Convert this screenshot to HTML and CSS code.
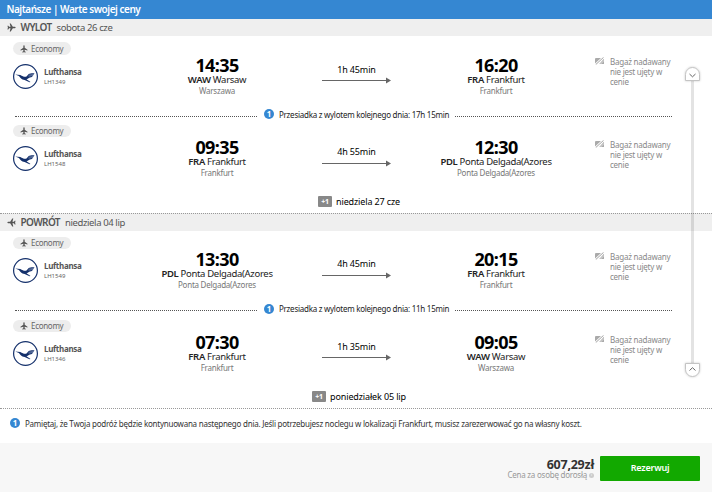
FILE: index.html
```html
<!DOCTYPE html>
<html lang="pl">
<head>
    <meta charset="UTF-8">
    <meta name="viewport" content="width=device-width, initial-scale=1.0">
    <title>Najtańsze | Warte swojej ceny</title>
    <link rel="stylesheet" href="styles.css">
</head>
<body>
    <svg width="0" height="0" class="defs">
        <symbol id="plane" viewBox="0 0 24 24">
            <path d="M23 12c0-1.200-1-2-2.200-2h-5.300L10 1.500H7.200L9.500 10H5.500L3.500 7H1.200L2.500 12l-1.300 5h2.300l2-3h4l-2.300 8.500H10l5.500-8.500h5.300c1.200 0 2.200-.8 2.200-2z"/>
        </symbol>
        <symbol id="crane" viewBox="0 0 25 25">
            <circle cx="12.500" cy="12.500" r="11.900" fill="#fff" stroke="#14306b" stroke-width="1.200"/>
            <path d="M2.300 10.600l5 .3c2.500 1.500 4.300 2.300 6.200 1.600l2.200-2.400c1-.7 3-.9 5.800-.8l-.8 1.300-.8 1.200-1 1.100-2.700.8c-1 .9-1.900 1.300-2.700 1.600l4 2.700-.9.200-5-2.200c-3.200-.3-4.300-2.400-5.700-3.900z" fill="#14306b"/>
            <path d="M15.500 11.200l5.500-.9M15.500 12.300l4.500-.9" stroke="#9dabc9" stroke-width=".5"/>
        </symbol>
        <symbol id="arrow" viewBox="0 0 69 7">
            <path d="M0 3.500h65" stroke="#666" stroke-width="1"/>
            <path d="M64 .5l5 3-5 3z" fill="#666"/>
        </symbol>
        <symbol id="nobag" viewBox="0 0 10 8">
            <path d="M0 1.500L1 1h5L0 6.500zM9 1.800V7H4.200z" fill="#aaa"/>
            <path d="M.8 7.500L8.500.4" stroke="#999" stroke-width=".9"/>
            <path d="M5 7.500L9.500 3" stroke="#fff" stroke-width=".6"/>
        </symbol>
    </svg>

    <div class="offer">
        <div class="title">Najtańsze | Warte swojej ceny</div>

        <div class="direction">
            <svg class="direction-icon"><use href="#plane"/></svg>
            <b>WYLOT</b><span>sobota 26 cze</span>
        </div>
        <div class="leg first">
            <div class="airline">
                <div class="cabin"><svg><use href="#plane"/></svg>Economy</div>
                <div class="carrier">
                    <svg><use href="#crane"/></svg>
                    <div><div class="name">Lufthansa</div><div class="number">LH1349</div></div>
                </div>
            </div>
            <div class="stop">
                <div class="time">14:35</div>
                <div class="city"><b>WAW</b> Warsaw</div>
                <div class="airport">Warszawa</div>
            </div>
            <div class="duration">1h 45min<svg><use href="#arrow"/></svg></div>
            <div class="stop">
                <div class="time">16:20</div>
                <div class="city"><b>FRA</b> Frankfurt</div>
                <div class="airport">Frankfurt</div>
            </div>
            <div class="baggage"><svg><use href="#nobag"/></svg><p>Bagaż nadawany<br>nie jest ujęty w<br>cenie</p></div>
        </div>
        <div class="layover"><i></i><em class="info">1</em><span>Przesiadka z wylotem kolejnego dnia: 17h 15min</span><i></i></div>
        <div class="leg">
            <div class="airline">
                <div class="cabin"><svg><use href="#plane"/></svg>Economy</div>
                <div class="carrier">
                    <svg><use href="#crane"/></svg>
                    <div><div class="name">Lufthansa</div><div class="number">LH1548</div></div>
                </div>
            </div>
            <div class="stop">
                <div class="time">09:35</div>
                <div class="city"><b>FRA</b> Frankfurt</div>
                <div class="airport">Frankfurt</div>
            </div>
            <div class="duration low">4h 55min<svg><use href="#arrow"/></svg></div>
            <div class="stop">
                <div class="time">12:30</div>
                <div class="city"><b>PDL</b> Ponta Delgada(Azores</div>
                <div class="airport">Ponta Delgada(Azores</div>
            </div>
            <div class="baggage"><svg><use href="#nobag"/></svg><p>Bagaż nadawany<br>nie jest ujęty w<br>cenie</p></div>
        </div>
        <div class="next-day"><b>+1</b><span>niedziela 27 cze</span></div>

        <div class="direction return">
            <svg class="direction-icon"><use href="#plane"/></svg>
            <b>POWRÓT</b><span>niedziela 04 lip</span>
        </div>
        <div class="leg">
            <div class="airline">
                <div class="cabin"><svg><use href="#plane"/></svg>Economy</div>
                <div class="carrier">
                    <svg><use href="#crane"/></svg>
                    <div><div class="name">Lufthansa</div><div class="number">LH1549</div></div>
                </div>
            </div>
            <div class="stop">
                <div class="time">13:30</div>
                <div class="city"><b>PDL</b> Ponta Delgada(Azores</div>
                <div class="airport">Ponta Delgada(Azores</div>
            </div>
            <div class="duration low">4h 45min<svg><use href="#arrow"/></svg></div>
            <div class="stop">
                <div class="time">20:15</div>
                <div class="city"><b>FRA</b> Frankfurt</div>
                <div class="airport">Frankfurt</div>
            </div>
            <div class="baggage"><svg><use href="#nobag"/></svg><p>Bagaż nadawany<br>nie jest ujęty w<br>cenie</p></div>
        </div>
        <div class="layover tall"><i></i><em class="info">1</em><span>Przesiadka z wylotem kolejnego dnia: 11h 15min</span><i></i></div>
        <div class="leg">
            <div class="airline">
                <div class="cabin"><svg><use href="#plane"/></svg>Economy</div>
                <div class="carrier">
                    <svg><use href="#crane"/></svg>
                    <div><div class="name">Lufthansa</div><div class="number">LH1346</div></div>
                </div>
            </div>
            <div class="stop">
                <div class="time">07:30</div>
                <div class="city"><b>FRA</b> Frankfurt</div>
                <div class="airport">Frankfurt</div>
            </div>
            <div class="duration">1h 35min<svg><use href="#arrow"/></svg></div>
            <div class="stop">
                <div class="time">09:05</div>
                <div class="city"><b>WAW</b> Warsaw</div>
                <div class="airport">Warszawa</div>
            </div>
            <div class="baggage"><svg><use href="#nobag"/></svg><p>Bagaż nadawany<br>nie jest ujęty w<br>cenie</p></div>
        </div>
        <div class="next-day"><b>+1</b><span>poniedziałek 05 lip</span></div>

        <div class="note"><em class="info">1</em><span>Pamiętaj, że Twoja podróż będzie kontynuowana następnego dnia. Jeśli potrzebujesz noclegu w lokalizacji Frankfurt, musisz zarezerwować go na własny koszt.</span></div>

        <div class="footer">
            <div class="price">
                <div class="amount">607,29zł</div>
                <div class="per-person"><span>Cena za osobę dorosłą</span><em>i</em></div>
            </div>
            <button class="book-btn">Rezerwuj</button>
        </div>

        <div class="rail">
            <svg class="handle" viewBox="0 0 15 14"><path d="M.5 13.500V7.500a7 7 0 0 1 14 0v6z"/><path d="M4.500 7l3 2.800 3-2.800"/></svg>
            <div class="bar"></div>
            <svg class="handle" viewBox="0 0 15 14"><path d="M.5.5v6a7 7 0 0 0 14 0v-6z"/><path d="M4.500 7.500l3-2.800 3 2.800"/></svg>
        </div>
    </div>
</body>
</html>
```

FILE: styles.css
```css
* {
    box-sizing: border-box;
}
body {
    margin: 0;
    font-family: "Noto Sans", sans-serif;
    background: #fff;
    color: #333;
}
.defs {
    position: absolute;
}
.offer {
    position: relative;
    width: 712px;
    height: 492px;
    overflow: hidden;
}
.title {
    height: 19px;
    padding-left: 6.5px;
    font-size: 10px;
    line-height: 19px;
    font-weight: 600;
    letter-spacing: -0.47px;
    color: #fff;
    background: #3587d2;
}
.direction {
    display: flex;
    align-items: center;
    height: 17px;
    padding-left: 7px;
    font-size: 9.5px;
    line-height: 17px;
    letter-spacing: -0.38px;
    color: #555;
    background: #efefef;
}
.direction b {
    margin: 0 5px 0 4.5px;
    font-size: 10px;
    font-weight: 600;
    letter-spacing: -0.62px;
}
.direction-icon {
    width: 9px;
    height: 9px;
    fill: #555;
}
.direction.return {
    height: 18px;
    border-top: 1px dotted #999;
}
.return .direction-icon {
    transform: scaleX(-1);
}
.leg {
    display: grid;
    grid-template-columns: 147px 140px 139px 140px 146px;
    height: 64px;
}
.leg.first {
    margin-top: 5px;
}
.direction.return + .leg {
    margin-top: 4px;
}
.airline {
    padding: 2px 0 0 13px;
}
.first .airline {
    padding-top: 1px;
}
.cabin {
    display: flex;
    align-items: center;
    width: 58px;
    height: 12px;
    padding-left: 7px;
    font-size: 8px;
    line-height: 12px;
    letter-spacing: -0.3px;
    color: #666;
    background: #ededed;
    border-radius: 7px;
}
.first .cabin {
    height: 13px;
}
.cabin svg {
    width: 8px;
    height: 8px;
    margin-right: 3px;
    fill: #555;
    transform: rotate(-90deg);
}
.carrier {
    display: flex;
    margin-top: 9px;
}
.carrier svg {
    width: 25px;
    height: 25px;
    margin-right: 6px;
}
.name {
    margin-top: 2px;
    font-size: 8px;
    line-height: 12px;
    font-weight: 700;
    letter-spacing: -0.3px;
    color: #555;
}
.number {
    font-size: 6px;
    line-height: 8px;
    color: #666;
}
.stop {
    text-align: center;
}
.time {
    margin-top: 14px;
    font-size: 18px;
    line-height: 20px;
    font-weight: 700;
    letter-spacing: -0.6px;
    color: #000;
}
.city {
    margin-top: -1px;
    font-size: 9.5px;
    line-height: 11px;
    letter-spacing: -0.32px;
    color: #222;
}
.city b {
    font-weight: 600;
}
.airport {
    font-size: 8px;
    line-height: 11px;
    letter-spacing: -0.25px;
    color: #777;
}
.duration {
    padding-top: 22px;
    text-align: center;
    font-size: 9px;
    line-height: 13px;
    letter-spacing: -0.15px;
    color: #000;
}
.duration svg {
    display: block;
    width: 69px;
    height: 7px;
    margin: 1px auto 0;
}
.duration.low svg {
    margin-top: 2px;
}
.baggage {
    display: flex;
    padding: 16px 0 0 29px;
    font-size: 8px;
    line-height: 10px;
    letter-spacing: -0.24px;
    color: #888;
}
.leg:not(.first) .baggage {
    padding-top: 17px;
}
.baggage svg {
    width: 10px;
    height: 8px;
    margin: 0 5px 0 0;
}
.baggage p {
    margin: 0;
}
.layover {
    display: flex;
    align-items: center;
    height: 18px;
    padding: 0 40px 0 15px;
    font-size: 8px;
    letter-spacing: -0.26px;
    color: #222;
}
.layover.tall {
    height: 19px;
}
.layover i {
    width: 242px;
    margin-top: 4px;
    border-top: 1px dotted #555;
}
.layover span + i {
    flex: 1;
}
.layover span {
    margin: 0 6px 0 5px;
    white-space: nowrap;
}
.info {
    width: 10px;
    height: 10px;
    border-radius: 50%;
    font-size: 8px;
    line-height: 10px;
    font-style: normal;
    font-weight: 700;
    text-align: center;
    color: #fff;
    background: #3587d2;
}
.layover .info {
    margin-left: 7px;
}
.next-day {
    display: flex;
    align-items: center;
    justify-content: center;
    height: 26px;
    padding: 3px 0 0 6px;
    font-size: 9px;
    letter-spacing: -0.14px;
    color: #000;
}
.next-day b {
    width: 14px;
    height: 11px;
    margin-right: 4px;
    font-size: 7px;
    line-height: 11px;
    text-align: center;
    color: #fff;
    background: #888;
    border-radius: 1px;
}
.note {
    display: flex;
    align-items: center;
    height: 35px;
    padding: 0 0 6px 10px;
    border-top: 1px dotted #999;
    font-size: 8px;
    letter-spacing: -0.235px;
}
.note span {
    margin-left: 5px;
    white-space: nowrap;
}
.footer {
    display: flex;
    justify-content: flex-end;
    height: 49px;
    padding: 13px 12px 0 0;
    background: #f7f7f7;
}
.price {
    margin-right: 6px;
    text-align: right;
}
.amount {
    font-size: 12.5px;
    line-height: 17px;
    font-weight: 700;
    letter-spacing: -0.25px;
}
.per-person {
    display: flex;
    justify-content: flex-end;
    font-size: 8px;
    line-height: 4px;
    letter-spacing: -0.24px;
    color: #999;
}
.per-person em {
    width: 5px;
    height: 5px;
    margin-left: 2px;
    border-radius: 50%;
    font-size: 4px;
    font-style: normal;
    text-align: center;
    background: #ccc;
    color: #fff;
}
.book-btn {
    width: 100px;
    height: 25px;
    padding: 0 0 2px;
    border: none;
    border-radius: 1px;
    font-family: inherit;
    font-size: 9px;
    font-weight: 600;
    letter-spacing: -0.2px;
    color: #fff;
    background: #12a900;
    cursor: pointer;
}
.rail {
    position: absolute;
    top: 67px;
    left: 685px;
    display: flex;
    flex-direction: column;
    align-items: center;
    width: 15px;
    height: 310px;
}
.handle {
    width: 15px;
    height: 14px;
    overflow: visible;
    fill: #fff;
    stroke: #c4c4c4;
    stroke-width: 1;
    filter: drop-shadow(0 0 1px rgba(0, 0, 0, 0.2));
}
.handle path + path {
    fill: none;
    stroke: #666;
}
.bar {
    flex: 1;
    width: 3px;
    background: rgba(0, 0, 0, 0.11);
}
```
